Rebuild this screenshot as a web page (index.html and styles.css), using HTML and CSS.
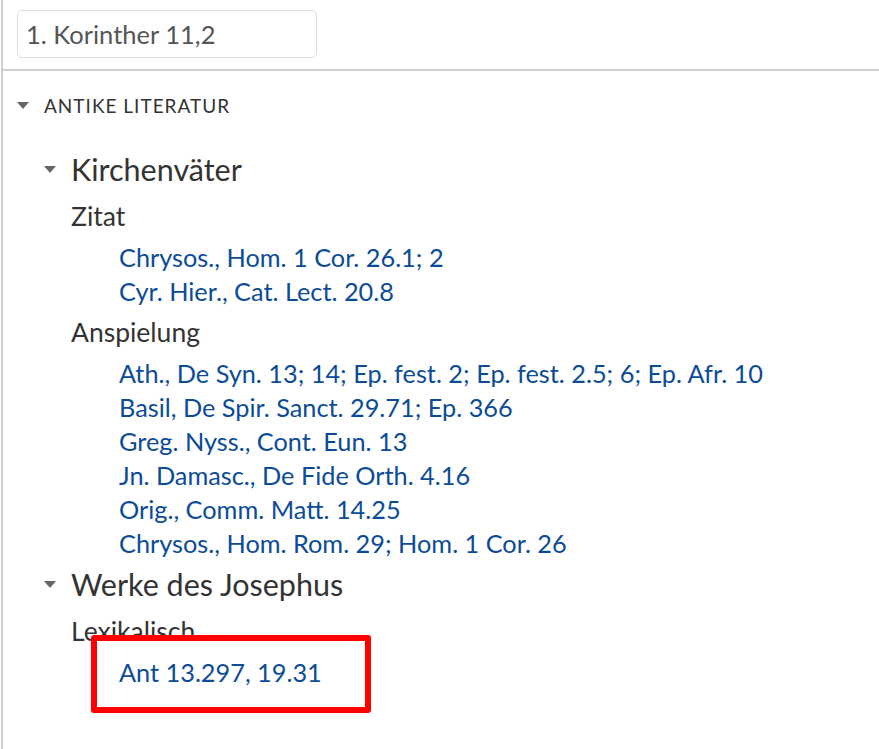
FILE: index.html
```html
<!DOCTYPE html>
<html lang="de">
<head>
<meta charset="utf-8">
<title>Antike Literatur</title>
<link rel="stylesheet" href="styles.css">
</head>
<body>
<div class="panel">
  <div class="search">
    <div class="search-input">1. Korinther 11,2</div>
  </div>
  <div class="content">
    <div class="section-head"><span class="tri"></span><span class="section-title">ANTIKE LITERATUR</span></div>
    <div class="category">
      <div class="cat-head"><span class="tri"></span><span class="cat-title">Kirchenväter</span></div>
      <div class="kind">Zitat</div>
      <ul class="refs">
        <li><a>Chrysos., Hom. 1 Cor. 26.1</a>; <a>2</a></li>
        <li><a>Cyr. Hier., Cat. Lect. 20.8</a></li>
      </ul>
      <div class="kind">Anspielung</div>
      <ul class="refs">
        <li><a>Ath., De Syn. 13</a>; <a>14</a>; <a>Ep. fest. 2</a>; <a>Ep. fest. 2.5</a>; <a>6</a>; <a>Ep. Afr. 10</a></li>
        <li><a>Basil, De Spir. Sanct. 29.71</a>; <a>Ep. 366</a></li>
        <li><a>Greg. Nyss., Cont. Eun. 13</a></li>
        <li><a>Jn. Damasc., De Fide Orth. 4.16</a></li>
        <li><a>Orig., Comm. Matt. 14.25</a></li>
        <li><a>Chrysos., Hom. Rom. 29</a>; <a>Hom. 1 Cor. 26</a></li>
      </ul>
    </div>
    <div class="category">
      <div class="cat-head"><span class="tri"></span><span class="cat-title">Werke des Josephus</span></div>
      <div class="kind">Lexikalisch</div>
      <ul class="refs">
        <li class="marked"><a>Ant 13.297, 19.31</a><span class="highlight"></span></li>
      </ul>
    </div>
  </div>
</div>
</body>
</html>
```

FILE: styles.css
```css
html, body {
  margin: 0;
  padding: 0;
  background: #ffffff;
}
body {
  font-family: "Lato", "Open Sans", sans-serif;
  color: #333333;
}
.panel {
  margin-left: 1px;
  border-left: 2px solid #cfcfcf;
  min-height: 749px;
  box-sizing: border-box;
}
.search {
  padding: 10px 0 11px 14px;
  border-bottom: 2px solid #cfcfcf;
}
.search-input {
  width: 300px;
  height: 48px;
  box-sizing: border-box;
  border: 1px solid #dddddd;
  border-radius: 5px;
  padding: 0 8px;
  font-size: 25.5px;
  line-height: 46px;
  color: #555555;
}
.content {
  padding: 22px 0 0 14px;
}
.tri {
  display: inline-block;
  width: 0;
  height: 0;
  border-left: 6px solid transparent;
  border-right: 6px solid transparent;
  border-top: 7px solid #666666;
  margin-right: 15px;
}
.section-head {
  display: flex;
  align-items: center;
  height: 24px;
}
.section-title {
  font-size: 19px;
  letter-spacing: 1px;
  color: #333333;
}
.category {
  padding-left: 27px;
}
.section-head + .category {
  margin-top: 32px;
}
.category + .category {
  margin-top: 4px;
}
.cat-head {
  display: flex;
  align-items: center;
  height: 40px;
}
.cat-title {
  font-size: 30.5px;
  color: #333333;
}
.kind {
  margin: 10px 0 0 27px;
  font-size: 26.5px;
  line-height: 34px;
  color: #333333;
}
.refs {
  list-style: none;
  margin: 7px 0 0 0;
  padding: 0 0 0 75px;
  font-size: 25.3px;
  line-height: 34px;
  color: #0c4c97;
}
.refs a {
  color: #0c4c97;
  text-decoration: none;
}
.refs + .kind {
  margin-top: 7px;
}
.marked {
  position: relative;
}
.highlight {
  position: absolute;
  left: -28px;
  top: -20px;
  width: 280px;
  height: 78px;
  box-sizing: border-box;
  border: 6px solid #ff0000;
  border-radius: 3px;
}
```
